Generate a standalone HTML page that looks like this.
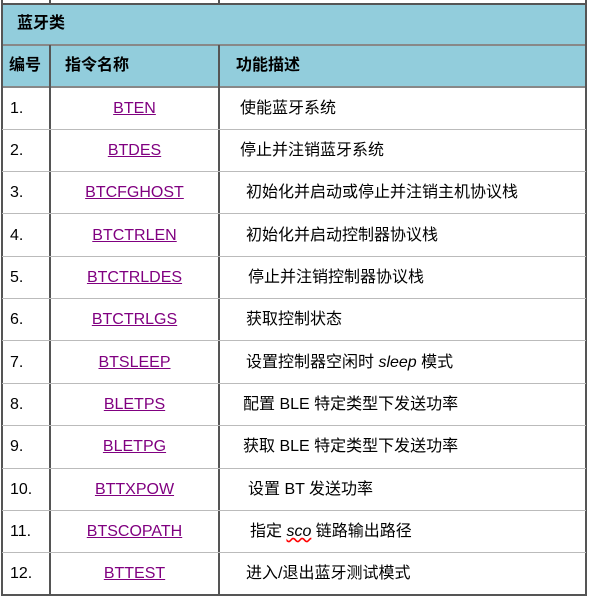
<!DOCTYPE html>
<html><head><meta charset="utf-8"><style>
body{margin:0;width:591px;height:597px;background:#fff;position:relative;overflow:hidden;font-family:"Liberation Sans","Noto Sans CJK SC",sans-serif;font-size:16px;color:#000}
.a{position:absolute}
.h{position:absolute;left:2px;width:584px;height:1px;background:#bbb}
.v{position:absolute;width:2px;background:#555}
.t{position:absolute;white-space:nowrap;line-height:20px}
.lk{color:#800080;text-decoration:underline;width:169px;text-align:center;left:50px;font-size:16px}
.n{left:10px}
</style></head><body>
<div class="a" style="left:2px;top:3px;width:584px;height:84px;background:#92CDDC"></div>
<div class="a" style="left:2px;top:3px;width:584px;height:2px;background:#555"></div>
<div class="a" style="left:2px;top:44px;width:584px;height:2px;background:#888"></div>
<div class="a" style="left:2px;top:86px;width:584px;height:2px;background:#888"></div>
<div class="a" style="left:2px;top:594px;width:584px;height:2px;background:#555"></div>
<div class="v" style="left:1px;top:0;height:596px"></div>
<div class="v" style="left:585px;top:0;height:596px"></div>
<div class="v" style="left:49px;top:0;height:4px"></div>
<div class="v" style="left:218px;top:0;height:4px"></div>
<div class="v" style="left:49px;top:45px;height:551px"></div>
<div class="v" style="left:218px;top:45px;height:551px"></div>
<div class="t" style="left:17px;top:14px;font-weight:bold">蓝牙类</div>
<div class="t" style="left:9px;top:56px;font-weight:bold">编号</div>
<div class="t" style="left:65px;top:56px;font-weight:bold">指令名称</div>
<div class="t" style="left:236px;top:56px;font-weight:bold">功能描述</div>
<div class="h" style="top:129px"></div><div class="h" style="top:171px"></div><div class="h" style="top:213px"></div><div class="h" style="top:256px"></div><div class="h" style="top:298px"></div><div class="h" style="top:340px"></div><div class="h" style="top:383px"></div><div class="h" style="top:425px"></div><div class="h" style="top:468px"></div><div class="h" style="top:510px"></div><div class="h" style="top:552px"></div>
<div class="t n" style="top:99px">1.</div><div class="t lk" style="top:99px">BTEN</div><div class="t" style="left:240px;top:99px">使能蓝牙系统</div>
<div class="t n" style="top:141px">2.</div><div class="t lk" style="top:141px">BTDES</div><div class="t" style="left:240px;top:141px">停止并注销蓝牙系统</div>
<div class="t n" style="top:183px">3.</div><div class="t lk" style="top:183px">BTCFGHOST</div><div class="t" style="left:246px;top:183px">初始化并启动或停止并注销主机协议栈</div>
<div class="t n" style="top:226px">4.</div><div class="t lk" style="top:226px">BTCTRLEN</div><div class="t" style="left:246px;top:226px">初始化并启动控制器协议栈</div>
<div class="t n" style="top:268px">5.</div><div class="t lk" style="top:268px">BTCTRLDES</div><div class="t" style="left:248px;top:268px">停止并注销控制器协议栈</div>
<div class="t n" style="top:310px">6.</div><div class="t lk" style="top:310px">BTCTRLGS</div><div class="t" style="left:246px;top:310px">获取控制状态</div>
<div class="t n" style="top:353px">7.</div><div class="t lk" style="top:353px">BTSLEEP</div><div class="t" style="left:246px;top:353px">设置控制器空闲时 <i>sleep</i> 模式</div>
<div class="t n" style="top:395px">8.</div><div class="t lk" style="top:395px">BLETPS</div><div class="t" style="left:243px;top:395px">配置 BLE 特定类型下发送功率</div>
<div class="t n" style="top:437px">9.</div><div class="t lk" style="top:437px">BLETPG</div><div class="t" style="left:243px;top:437px">获取 BLE 特定类型下发送功率</div>
<div class="t n" style="top:480px">10.</div><div class="t lk" style="top:480px">BTTXPOW</div><div class="t" style="left:248px;top:480px">设置 BT 发送功率</div>
<div class="t n" style="top:522px">11.</div><div class="t lk" style="top:522px">BTSCOPATH</div><div class="t" style="left:250px;top:522px">指定 <i style="text-decoration:underline wavy red">sco</i> 链路输出路径</div>
<div class="t n" style="top:564px">12.</div><div class="t lk" style="top:564px">BTTEST</div><div class="t" style="left:246px;top:564px">进入/退出蓝牙测试模式</div>
</body></html>
